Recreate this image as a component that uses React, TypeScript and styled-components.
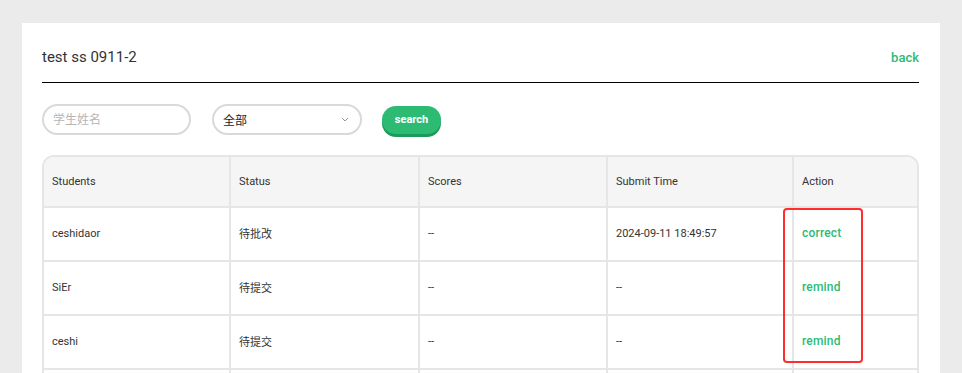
import React, { useState } from 'react';
import styled, { createGlobalStyle } from 'styled-components';

type RowType = {
  name: string;
  status: string;
  score: string;
  time: string;
  action: 'correct' | 'remind' | '';
};

const GREEN = '#2dbb74';

const GlobalStyle = createGlobalStyle`
  body {
    margin: 0;
    background-color: #ebebeb;
    font-family: Roboto, "Noto Sans CJK SC", sans-serif;
    color: #333;
  }
`;

const Card = styled.div`
  margin: 23px 22px 0;
  padding: 0 21px 0 20px;
  min-height: 420px;
  background-color: #fff;
`;

const Header = styled.div`
  display: flex;
  justify-content: space-between;
  align-items: center;
  padding: 25px 0 16px;
  border-bottom: 1px solid #000;
`;

const Title = styled.h1`
  margin: 0;
  font-size: 15px;
  line-height: 18px;
  font-weight: 400;
  color: #333;
`;

const BackLink = styled.a`
  font-size: 13px;
  font-weight: 500;
  color: ${GREEN};
  text-decoration: none;
  cursor: pointer;
`;

const Filters = styled.div`
  display: flex;
  align-items: center;
  margin-top: 21px;
`;

const TextInput = styled.input`
  box-sizing: border-box;
  width: 149px;
  height: 31px;
  padding: 0 9px;
  border: 2px solid #d9d9d9;
  border-radius: 16px;
  outline: none;
  font-family: inherit;
  font-size: 12px;
  color: #333;

  &::placeholder {
    color: #b5b5b5;
  }
`;

const Select = styled.div`
  box-sizing: border-box;
  display: flex;
  align-items: center;
  justify-content: space-between;
  width: 150px;
  height: 31px;
  margin: 0 20px 0 21px;
  padding: 0 11px 0 9px;
  border: 2px solid #d9d9d9;
  border-radius: 16px;
  font-size: 12px;
  color: #222;
  cursor: pointer;
`;

const SearchButton = styled.button`
  width: 59px;
  height: 28px;
  border: none;
  border-radius: 14px;
  background-color: ${GREEN};
  box-shadow: 0 3px 0 #1c9a5a;
  color: #fff;
  font-family: inherit;
  font-size: 11px;
  font-weight: 700;
  cursor: pointer;
`;

const TableArea = styled.div`
  position: relative;
  margin-top: 20px;
`;

const TableFrame = styled.div`
  border: 2px solid #e6e6e6;
  border-bottom: none;
  border-radius: 12px 12px 0 0;
  overflow: hidden;
`;

const Table = styled.table`
  width: 100%;
  table-layout: fixed;
  border-collapse: separate;
  border-spacing: 0;
  font-size: 11px;
`;

const HeadCell = styled.th`
  height: 49px;
  padding: 0 0 0 8px;
  text-align: left;
  font-weight: 400;
  background-color: #f5f5f5;
  border-bottom: 2px solid #e6e6e6;
  border-right: 2px solid #e6e6e6;

  &:last-child {
    border-right: none;
  }
`;

const Cell = styled.td<{ $action?: boolean }>`
  box-sizing: border-box;
  height: 54px;
  padding: 0 0 2px 8px;
  border-bottom: 2px solid #e6e6e6;
  border-right: 2px solid #e6e6e6;
  color: ${p => (p.$action ? GREEN : '#333')};
  font-size: ${p => (p.$action ? '12px' : '11px')};
  font-weight: ${p => (p.$action ? 500 : 400)};
  letter-spacing: ${p => (p.$action ? '0.2px' : '0')};

  &:last-child {
    border-right: none;
  }
`;

const Highlight = styled.div`
  position: absolute;
  left: 741px;
  top: 53px;
  width: 76px;
  height: 151px;
  border: 2px solid #ff2d2d;
  border-radius: 4px;
  pointer-events: none;
`;

const Chevron = () => (
  <svg width="8" height="5" viewBox="0 0 8 5" fill="none">
    <path d="M1 1l3 3 3-3" stroke="#999" strokeWidth="1" />
  </svg>
);

const rows: RowType[] = [
  { name: 'ceshidaor', status: '待批改', score: '--', time: '2024-09-11 18:49:57', action: 'correct' },
  { name: 'SiEr', status: '待提交', score: '--', time: '--', action: 'remind' },
  { name: 'ceshi', status: '待提交', score: '--', time: '--', action: 'remind' },
  { name: '', status: '', score: '', time: '', action: '' },
];

export default function App() {
  const [keyword, setKeyword] = useState('');

  return (
    <>
      <GlobalStyle />
      <Card>
        <Header>
          <Title>test ss 0911-2</Title>
          <BackLink>back</BackLink>
        </Header>
        <Filters>
          <TextInput value={keyword} placeholder="学生姓名" onChange={e => setKeyword(e.target.value)} />
          <Select>
            <span>全部</span>
            <Chevron />
          </Select>
          <SearchButton>search</SearchButton>
        </Filters>
        <TableArea>
          <TableFrame>
            <Table>
              <colgroup>
                <col style={{ width: 187 }} />
                <col style={{ width: 189 }} />
                <col style={{ width: 188 }} />
                <col style={{ width: 186 }} />
                <col />
              </colgroup>
              <thead>
                <tr>
                  <HeadCell>Students</HeadCell>
                  <HeadCell>Status</HeadCell>
                  <HeadCell>Scores</HeadCell>
                  <HeadCell>Submit Time</HeadCell>
                  <HeadCell>Action</HeadCell>
                </tr>
              </thead>
              <tbody>
                {rows.map((row, i) => (
                  <tr key={i}>
                    <Cell>{row.name}</Cell>
                    <Cell>{row.status}</Cell>
                    <Cell>{row.score}</Cell>
                    <Cell>{row.time}</Cell>
                    <Cell $action>{row.action}</Cell>
                  </tr>
                ))}
              </tbody>
            </Table>
          </TableFrame>
          <Highlight />
        </TableArea>
      </Card>
    </>
  );
}
